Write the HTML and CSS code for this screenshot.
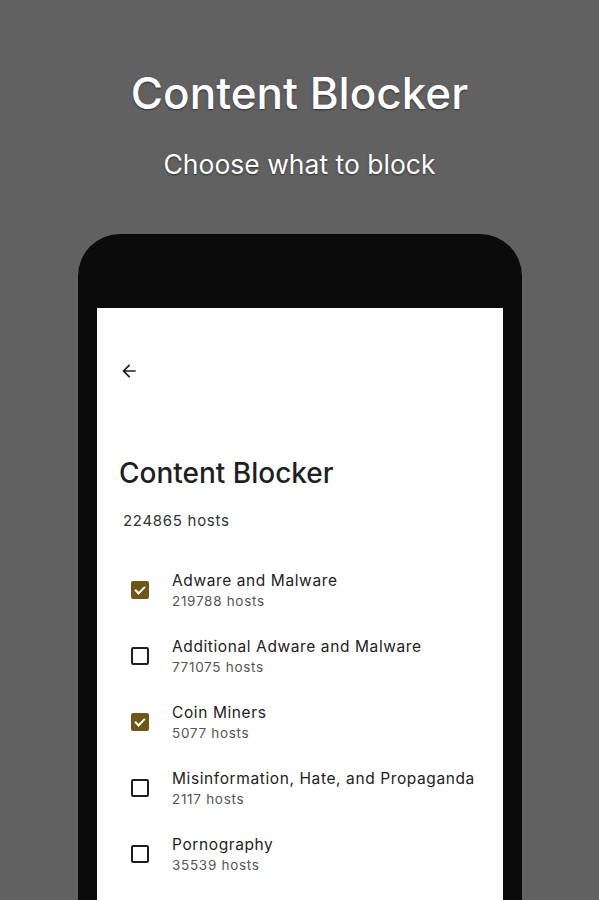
FILE: index.html
```html
<html>
<head>
    <meta name="viewport" content="width=device-width, initial-scale=1.0" />
    <title>Content Blocker</title>
    <link rel="stylesheet" href="styles.css">
</head>
<body>
    <header class="promo">
        <h1>Content Blocker</h1>
        <p>Choose what to block</p>
    </header>
    <div class="phone">
        <div class="screen">
            <div class="toolbar">
                <svg class="back" width="24" height="24" viewBox="0 0 24 24">
                    <path d="M20 11H7.83l5.59-5.59L12 4l-8 8 8 8 1.41-1.41L7.83 13H20v-2z" fill="#1f1f1f"/>
                </svg>
            </div>
            <h2>Content Blocker</h2>
            <p class="total">224865 hosts</p>
            <ul class="lists">
                <li class="item checked">
                    <span class="box"></span>
                    <div class="info">
                        <span class="name">Adware and Malware</span>
                        <span class="count">219788 hosts</span>
                    </div>
                </li>
                <li class="item">
                    <span class="box"></span>
                    <div class="info">
                        <span class="name">Additional Adware and Malware</span>
                        <span class="count">771075 hosts</span>
                    </div>
                </li>
                <li class="item checked">
                    <span class="box"></span>
                    <div class="info">
                        <span class="name">Coin Miners</span>
                        <span class="count">5077 hosts</span>
                    </div>
                </li>
                <li class="item">
                    <span class="box"></span>
                    <div class="info">
                        <span class="name">Misinformation, Hate, and Propaganda</span>
                        <span class="count">2117 hosts</span>
                    </div>
                </li>
                <li class="item">
                    <span class="box"></span>
                    <div class="info">
                        <span class="name">Pornography</span>
                        <span class="count">35539 hosts</span>
                    </div>
                </li>
            </ul>
        </div>
    </div>
</body>
</html>
```

FILE: styles.css
```css
html, body {
    margin: 0;
    height: 900px;
    overflow: hidden;
}
body {
    background-color: #616161;
    font-family: "Inter", "Liberation Sans", sans-serif;
}
.promo {
    text-align: center;
    color: #fff;
    padding-top: 67px;
    height: 166px;
    box-sizing: border-box;
}
.promo h1 {
    margin: 0;
    font-size: 44px;
    font-weight: 500;
    line-height: 52px;
    text-shadow: 0 1px 2px rgba(0, 0, 0, 0.5);
}
.promo p {
    margin: 29px 0 0 0;
    font-size: 26.5px;
    line-height: 32px;
    text-shadow: 0 1px 2px rgba(0, 0, 0, 0.5);
}
.phone {
    margin: 68px 77px 0 78px;
    height: 592px;
    background-color: #0b0b0b;
    border-radius: 42px 42px 0 0;
    padding: 74px 19px 0 19px;
}
.screen {
    background-color: #fff;
    height: 100%;
    padding: 0 22px;
    color: #1f1f1f;
}
.toolbar {
    height: 148px;
    box-sizing: border-box;
    padding-top: 53px;
}
.back {
    display: block;
    width: 20px;
    height: 20px;
}
.screen h2 {
    margin: 0;
    font-size: 28px;
    font-weight: 500;
    line-height: 34px;
}
.total {
    margin: 21px 0 0 4px;
    font-size: 15px;
    letter-spacing: 0.7px;
    color: #333;
}
.lists {
    list-style: none;
    margin: 27px 0 0 0;
    padding: 0;
}
.item {
    display: flex;
    align-items: center;
    height: 66px;
}
.box {
    width: 14px;
    height: 14px;
    border: 2px solid #1f1f1f;
    border-radius: 2px;
    margin: 0 23px 0 12px;
}
.checked .box {
    background-color: #6e5616;
    border-color: #6e5616;
    position: relative;
}
.checked .box::after {
    content: "";
    position: absolute;
    left: 4px;
    top: 1px;
    width: 4px;
    height: 8px;
    border: solid #fff;
    border-width: 0 2px 2px 0;
    transform: rotate(45deg);
}
.info {
    display: flex;
    flex-direction: column;
}
.name {
    font-size: 15.5px;
    letter-spacing: 0.6px;
    line-height: 22px;
    color: #222;
}
.count {
    font-size: 13.5px;
    letter-spacing: 0.7px;
    line-height: 18px;
    color: #555;
}
```
